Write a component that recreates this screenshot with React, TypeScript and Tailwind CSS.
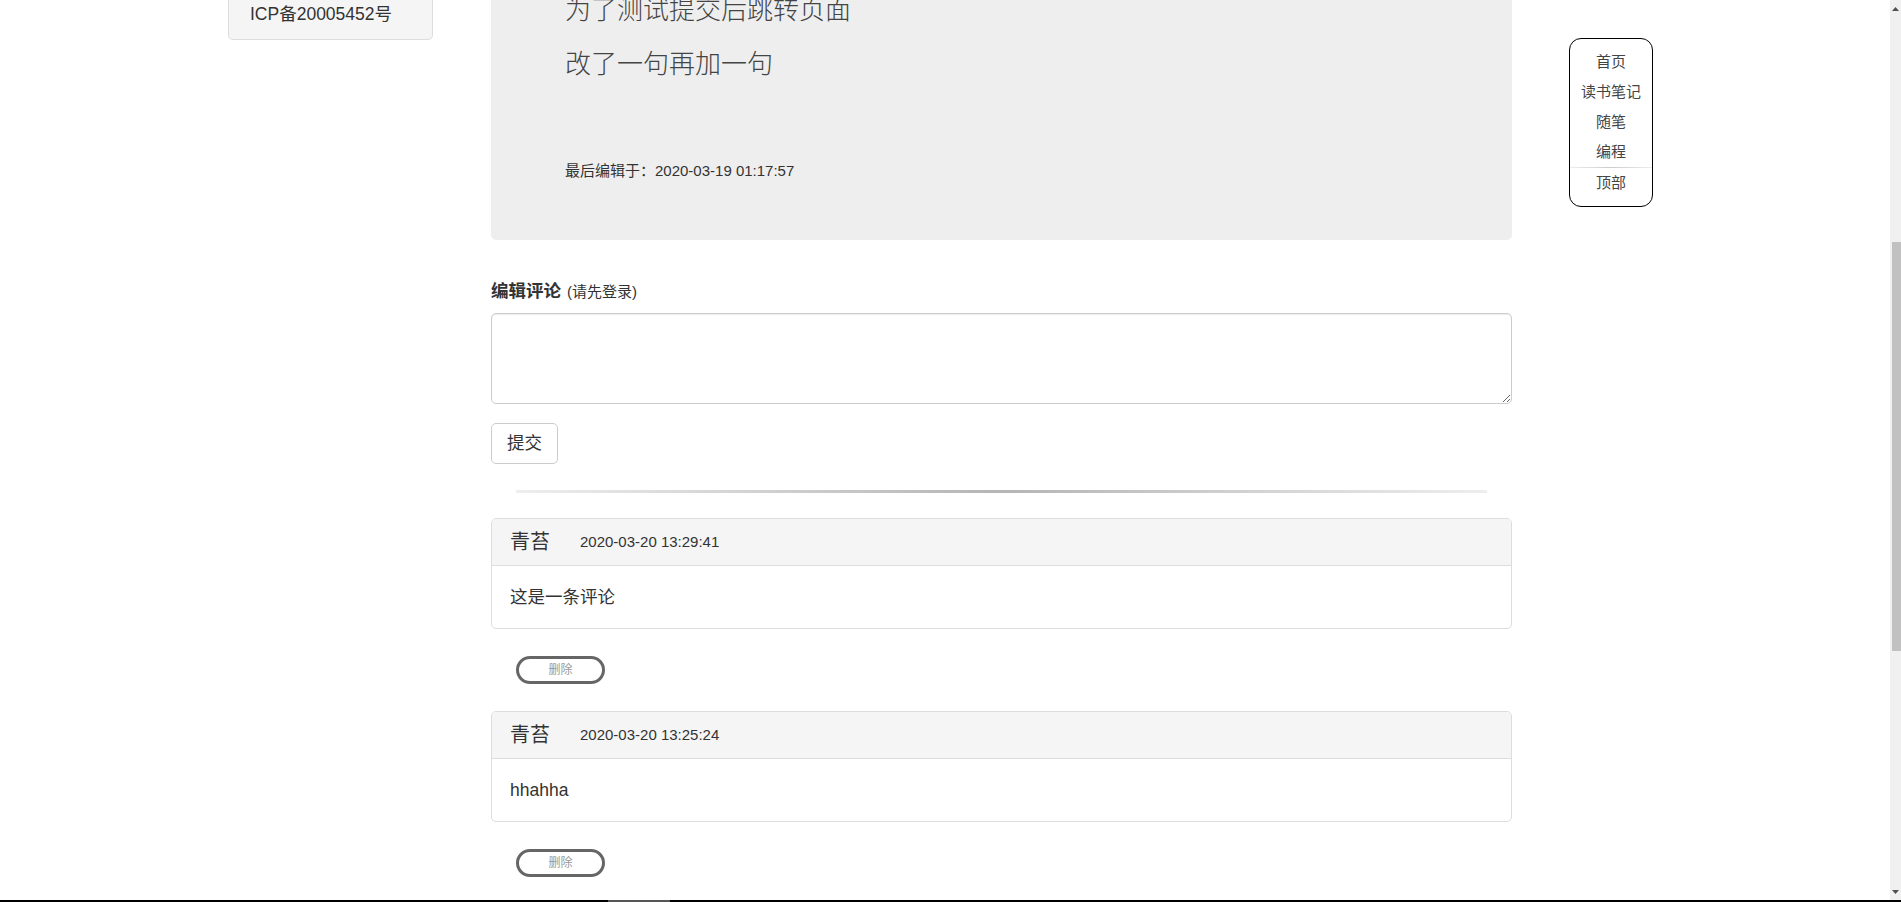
import React from 'react';

interface CommentItem {
  id: number;
  author: string;
  time: string;
  body: string;
}

const comments: CommentItem[] = [
  { id: 1, author: '青苔', time: '2020-03-20 13:29:41', body: '这是一条评论' },
  { id: 2, author: '青苔', time: '2020-03-20 13:25:24', body: 'hhahha' },
];

const navItems = ['首页', '读书笔记', '随笔', '编程'];

const CommentCard = ({ comment }: { comment: CommentItem }) => (
  <>
    <div className="mt-[27px] first:mt-[25px] border border-[#ddd] rounded-[5px] bg-white overflow-hidden">
      <div className="h-[47px] bg-[#f5f5f5] border-b border-[#ddd] flex items-center pl-[18px]">
        <span className="text-[20px] text-[#333]">{comment.author}</span>
        <span className="ml-[30px] text-[15px] text-[#333]">{comment.time}</span>
      </div>
      <div className="h-[62px] flex items-center pl-[18px] text-[17.5px] text-[#333]">
        {comment.body}
      </div>
    </div>
    <button
      type="button"
      className="mt-[27px] ml-[25px] w-[89px] h-[28px] border-[3px] border-[#666] rounded-full text-[12px] text-[#999] flex items-center justify-center"
    >
      删除
    </button>
  </>
);

const Scrollbar = () => (
  <div className="w-[11px] h-full bg-[#f0f0f0] flex flex-col items-end">
    <div className="h-[17px] w-full flex items-center justify-center">
      <svg width="7" height="4" viewBox="0 0 7 4">
        <path d="M0 4 L3.5 0 L7 4 Z" fill="#505050" />
      </svg>
    </div>
    <div className="h-[225px]" />
    <div className="h-[409px] w-[9px] bg-[#c1c1c1]" />
    <div className="flex-1" />
    <div className="h-[17px] w-full flex items-center justify-center">
      <svg width="7" height="4" viewBox="0 0 7 4">
        <path d="M0 0 L7 0 L3.5 4 Z" fill="#505050" />
      </svg>
    </div>
  </div>
);

export default function App() {
  return (
    <div className="w-[1901px] h-[902px] overflow-hidden bg-white flex flex-col font-['Liberation_Sans','Noto_Sans_CJK_SC',sans-serif] text-[#333]">
      <div className="flex h-[900px]">
        <div className="flex-1 flex items-start pl-[228px]">
          {/* left sidebar, scrolled so only the bottom shows */}
          <div className="w-[205px] h-[40px] bg-[#f5f5f5] border border-t-0 border-[#ddd] rounded-b-[5px] pl-[21px] pt-[3px] text-[17.5px] leading-[23px]">
            ICP备20005452号
          </div>

          <div className="ml-[58px] w-[1021px] flex flex-col">
            <div className="h-[240px] bg-[#eee] rounded-b-[5px] pl-[74px]">
              <p className="-mt-[8px] text-[26px] leading-[36px] text-[#444] font-light">为了测试提交后跳转页面</p>
              <p className="mt-[18px] text-[26px] leading-[36px] text-[#444] font-light">改了一句再加一句</p>
              <p className="mt-[78px] text-[15px] leading-[21px]">最后编辑于：2020-03-19 01:17:57</p>
            </div>

            <div className="mt-[40px] leading-[23px]">
              <span className="text-[17.5px] font-bold">编辑评论</span>
              <span className="ml-[6px] text-[15px]">(请先登录)</span>
            </div>
            <textarea className="mt-[10px] h-[91px] w-full border border-[#ccc] rounded-[5px] shadow-[inset_0_1px_1px_rgba(0,0,0,0.075)]" />
            <div>
              <button
                type="button"
                className="mt-[19px] w-[67px] h-[41px] border border-[#ccc] rounded-[5px] bg-white text-[17.5px]"
              >
                提交
              </button>
            </div>

            <div className="mt-[26px] mx-[25px] h-[3px] bg-linear-to-r from-[#eee] via-[#b5b5b5] to-[#eee]" />

            <div className="flex flex-col items-stretch">
              {comments.map(c => (
                <CommentCard key={c.id} comment={c} />
              ))}
            </div>
          </div>

          <div className="ml-[57px] mt-[38px] w-[84px] border border-black rounded-[12px] pt-[8px] pb-[8px] flex flex-col items-center text-[15px] text-[#444]">
            {navItems.map(item => (
              <div key={item} className="h-[30px] leading-[30px]">
                {item}
              </div>
            ))}
            <div className="w-full h-[1px] bg-linear-to-r from-[#eee] via-[#ccc] to-[#eee]" />
            <div className="h-[30px] leading-[30px]">顶部</div>
          </div>
        </div>
        <Scrollbar />
      </div>
      <div className="h-[2px] bg-black flex">
        <div className="ml-[608px] w-[62px] bg-[#555]" />
      </div>
    </div>
  );
}
